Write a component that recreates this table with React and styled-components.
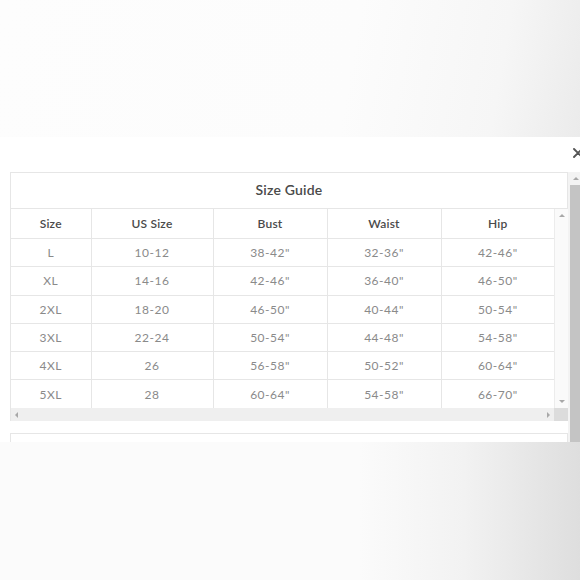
import React from "react";
import styled, { createGlobalStyle } from "styled-components";

const Global = createGlobalStyle`
  html, body { margin: 0; padding: 0; }
  body {
    width: 580px;
    height: 580px;
    overflow: hidden;
    font-family: "Lato", "Open Sans", sans-serif;
    background: #fcfcfc;
  }
`;

const Page = styled.div`
  width: 580px;
  height: 580px;
  display: flex;
  flex-direction: column;
`;

const Shade = styled.div`
  height: ${(p) => p.$h}px;
  flex: ${(p) => (p.$grow ? 1 : "none")};
  background: ${(p) =>
    p.$bottom
      ? "linear-gradient(90deg, #fbfbfb 0%, #fbfbfb 62%, #f2f2f2 80%, #dedede 100%)"
      : "linear-gradient(100deg, #fdfdfd 0%, #fcfcfc 60%, #f6f6f6 85%, #ebebeb 100%)"};
`;

const Panel = styled.div`
  position: relative;
  height: 305px;
  background: #fff;
  padding-top: 35px;
  box-sizing: border-box;
  display: flex;
  overflow: hidden;
`;

const Close = styled.button`
  position: absolute;
  top: 9px;
  right: -5px;
  width: 14px;
  height: 14px;
  padding: 0;
  border: none;
  background: none;
  display: flex;
  align-items: center;
  justify-content: center;
`;

const Content = styled.div`
  margin-left: 10px;
  width: 558px;
  display: flex;
  flex-direction: column;
`;

const Box = styled.div`
  border: 1px solid #e6e6e6;
  border-bottom: none;
  display: flex;
  flex-direction: column;
`;

const Title = styled.div`
  height: 36px;
  padding-bottom: 3px;
  box-sizing: border-box;
  border-bottom: 1px solid #e6e6e6;
  display: flex;
  align-items: center;
  justify-content: center;
  font-size: 14px;
  font-weight: 600;
  color: #4a4a4a;
  letter-spacing: 0.2px;
`;

const ScrollArea = styled.div`
  display: grid;
  grid-template-columns: 543px 14px;
  grid-template-rows: 199px 13px;
`;

const Table = styled.table`
  border-collapse: collapse;
  width: 543px;
  table-layout: fixed;
`;

const Th = styled.th`
  height: 28px;
  padding: 0 0 1px;
  font-size: 12px;
  font-weight: 600;
  color: #4a4a4a;
  letter-spacing: 0.2px;
  border-right: 1px solid #e6e6e6;
  border-bottom: 1px solid #e6e6e6;
  &:last-child { border-right: none; }
`;

const Td = styled.td`
  height: 27.3px;
  font-size: 12px;
  font-weight: 400;
  color: #8a8a8a;
  letter-spacing: 0.5px;
  text-align: center;
  border-right: 1px solid #e6e6e6;
  border-bottom: 1px solid #e6e6e6;
  padding: 0;
  &:last-child { border-right: none; }
`;

const VScroll = styled.div`
  background: #fafafa;
  border-left: 1px solid #ececec;
  display: flex;
  flex-direction: column;
  justify-content: space-between;
  align-items: center;
  padding: 5px 0;
  box-sizing: border-box;
`;

const HScroll = styled.div`
  background: #efefef;
  display: flex;
  justify-content: space-between;
  align-items: center;
  padding: 0 4px;
`;

const Corner = styled.div`
  background: #dcdcdc;
`;

const Arrow = styled.span`
  width: 0;
  height: 0;
  border: 3px solid transparent;
  ${(p) => p.$dir === "up" && "border-bottom-color: #a8a8a8; border-top-width: 0;"}
  ${(p) => p.$dir === "down" && "border-top-color: #a8a8a8; border-bottom-width: 0;"}
  ${(p) => p.$dir === "left" && "border-right-color: #a8a8a8; border-left-width: 0;"}
  ${(p) => p.$dir === "right" && "border-left-color: #a8a8a8; border-right-width: 0;"}
`;

const Gap = styled.div`
  height: 12px;
`;

const NextBox = styled.div`
  flex: 1;
  border: 1px solid #e6e6e6;
  border-bottom: none;
`;

const OuterScroll = styled.div`
  width: 12px;
  display: flex;
  flex-direction: column;
  background: #f3f3f3;
`;

const ScrollBtn = styled.div`
  height: 13px;
  display: flex;
  align-items: center;
  justify-content: center;
  padding-left: 3px;
`;

const Thumb = styled.div`
  flex: 1;
  margin-left: 2px;
  background: #c4c4c4;
`;

const headers = ["Size", "US Size", "Bust", "Waist", "Hip"];
const widths = [80, 122, 114, 114, 113];
const rows = [
  ["L", "10-12", '38-42"', '32-36"', '42-46"'],
  ["XL", "14-16", '42-46"', '36-40"', '46-50"'],
  ["2XL", "18-20", '46-50"', '40-44"', '50-54"'],
  ["3XL", "22-24", '50-54"', '44-48"', '54-58"'],
  ["4XL", "26", '56-58"', '50-52"', '60-64"'],
  ["5XL", "28", '60-64"', '54-58"', '66-70"'],
];

export default function App() {
  return (
    <Page>
      <Global />
      <Shade $h={137} />
      <Panel>
        <Close aria-label="Close">
          <svg width="10" height="10" viewBox="0 0 10 10">
            <path d="M1 1L9 9M9 1L1 9" stroke="#555" strokeWidth="1.9" strokeLinecap="round" />
          </svg>
        </Close>
        <Content>
          <Box>
            <Title>Size Guide</Title>
            <ScrollArea>
              <Table>
                <colgroup>
                  {widths.map((w, i) => (
                    <col key={i} style={{ width: w }} />
                  ))}
                </colgroup>
                <thead>
                  <tr>
                    {headers.map((h) => (
                      <Th key={h}>{h}</Th>
                    ))}
                  </tr>
                </thead>
                <tbody>
                  {rows.map((r) => (
                    <tr key={r[0]}>
                      {r.map((c, i) => (
                        <Td key={i}>{c}</Td>
                      ))}
                    </tr>
                  ))}
                </tbody>
              </Table>
              <VScroll>
                <Arrow $dir="up" />
                <Arrow $dir="down" />
              </VScroll>
              <HScroll>
                <Arrow $dir="left" />
                <Arrow $dir="right" />
              </HScroll>
              <Corner />
            </ScrollArea>
          </Box>
          <Gap />
          <NextBox />
        </Content>
        <OuterScroll>
          <ScrollBtn>
            <Arrow $dir="up" />
          </ScrollBtn>
          <Thumb />
        </OuterScroll>
      </Panel>
      <Shade $grow $bottom />
    </Page>
  );
}
